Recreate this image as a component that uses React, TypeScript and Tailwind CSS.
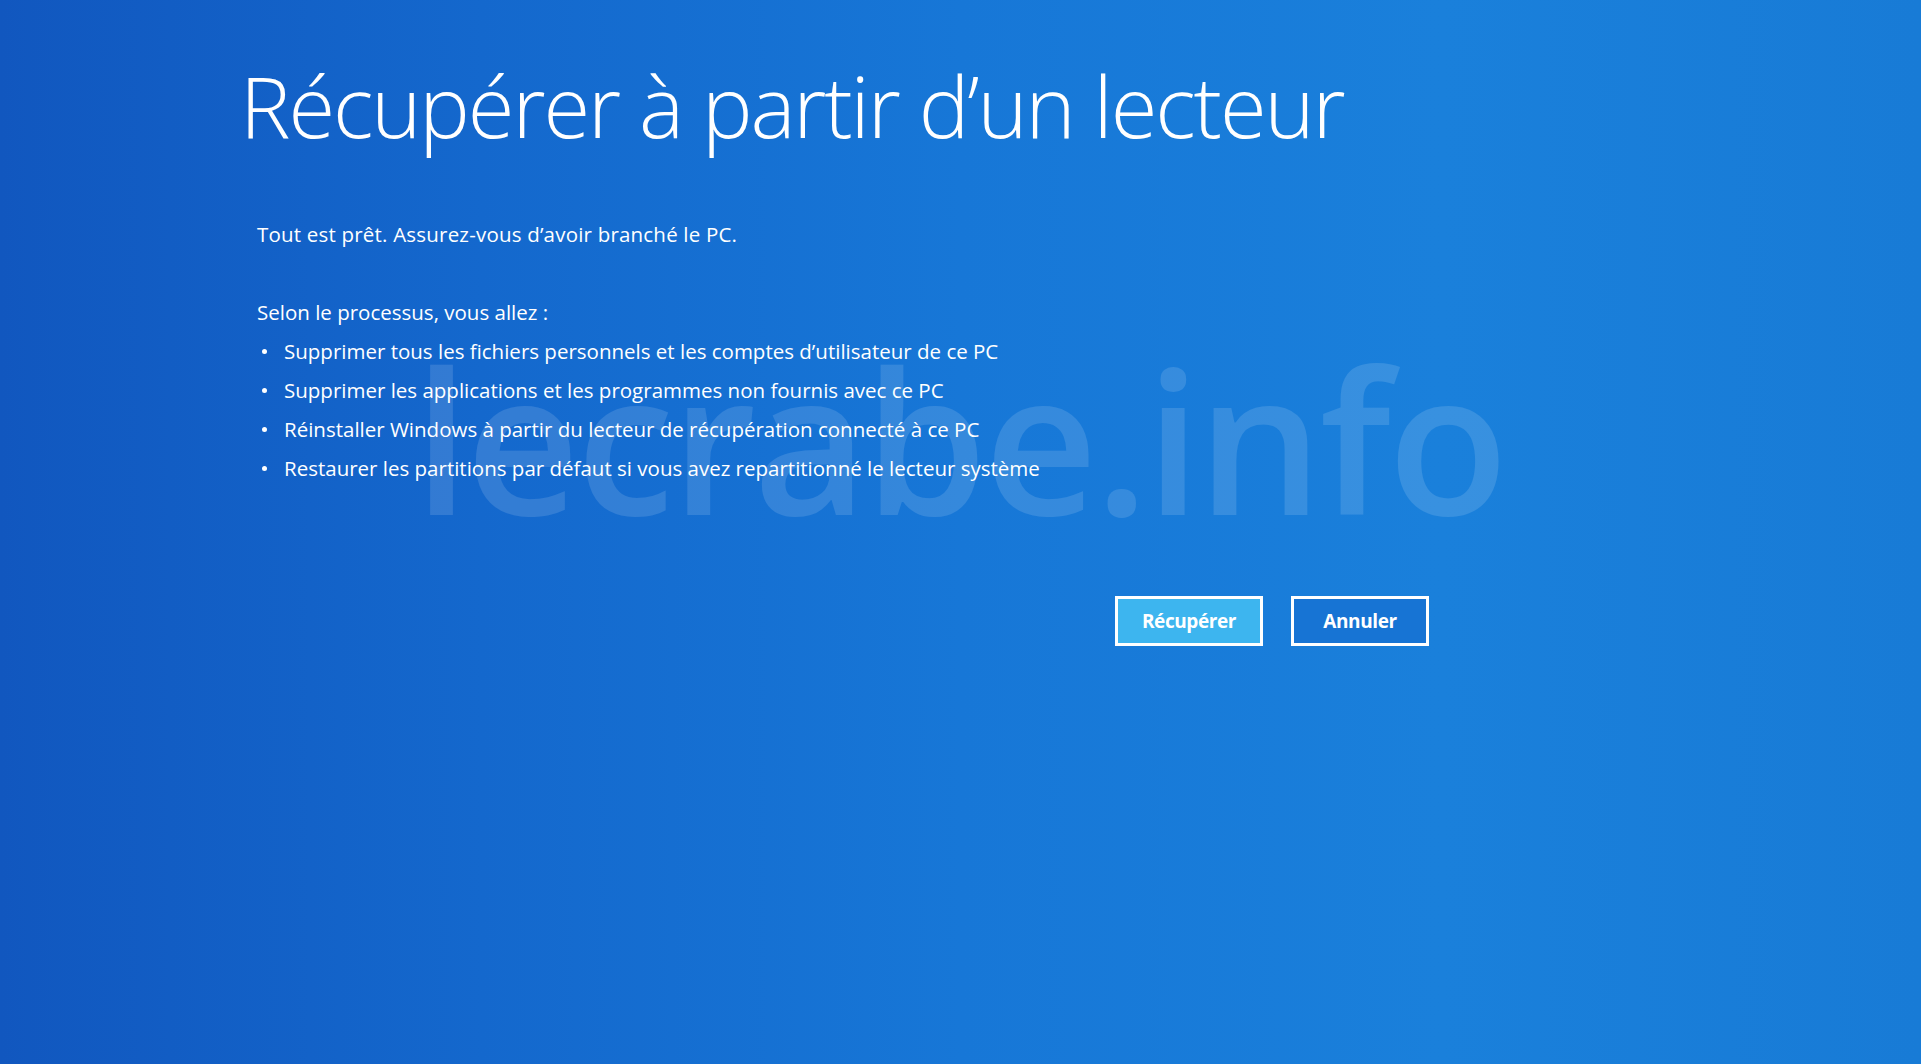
const steps = [
  'Supprimer tous les fichiers personnels et les comptes d’utilisateur de ce PC',
  'Supprimer les applications et les programmes non fournis avec ce PC',
  'Réinstaller Windows à partir du lecteur de récupération connecté à ce PC',
  'Restaurer les partitions par défaut si vous avez repartitionné le lecteur système',
];

const RecoveryButton = ({ label, primary }: { label: string; primary?: boolean }) => (
  <button
    className={
      primary
        ? 'h-[50px] w-[148px] border-[3px] border-white bg-[#3db5ef] text-[19px] font-bold tracking-[-0.4px] text-white'
        : 'h-[50px] w-[138px] border-[3px] border-white bg-[#1774d4] text-[19px] font-bold tracking-[-0.4px] text-white'
    }
  >
    {label}
  </button>
);

export default function App() {
  return (
    <div className="relative h-[1064px] w-full overflow-hidden bg-[linear-gradient(90deg,#1157bf_0%,#1468cd_25%,#1777d7_50%,#1a80db_75%,#187bd6_100%)] font-['Open_Sans',sans-serif] text-white">
      {/* site watermark, sits behind the text */}
      <div className="pointer-events-none absolute left-[414px] top-[340px] z-0 select-none text-[197px] font-semibold leading-none tracking-[-3px] text-white/[0.13]">
        lecrabe.info
      </div>

      <div className="relative z-10 flex w-[1429px] flex-col pl-[240px] pt-[63px]">
        <h1 className="text-[85px] font-light leading-none tracking-[-2.1px]">
          Récupérer à partir d’un lecteur
        </h1>

        <div className="mt-[67px] pl-[17px] text-[20.5px] leading-[39px]">
          <p className="tracking-[0.2px]">Tout est prêt. Assurez-vous d’avoir branché le PC.</p>
          <p className="mt-[39px]">Selon le processus, vous allez :</p>
          <ul>
            {steps.map((step) => (
              <li key={step} className="flex items-center pl-[5px]">
                <span className="mr-[17px] h-[5px] w-[5px] shrink-0 rounded-full bg-white" />
                {step}
              </li>
            ))}
          </ul>
        </div>

        <div className="mt-[108px] flex justify-end gap-[28px]">
          <RecoveryButton label="Récupérer" primary />
          <RecoveryButton label="Annuler" />
        </div>
      </div>
    </div>
  );
}
